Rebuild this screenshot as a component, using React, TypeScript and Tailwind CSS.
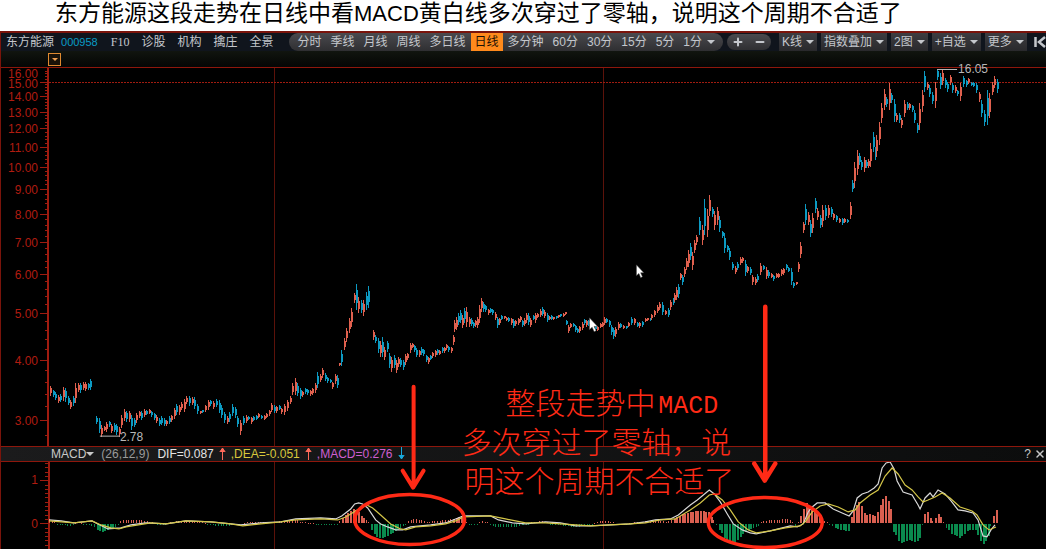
import { Minus, Plus, X } from "lucide-react";

const UI_FONT = "font-['Liberation_Sans','Noto_Sans_CJK_SC',sans-serif]";

/* Candles: each run spreads its "high-low" bars evenly between two x positions. r = rising, d = falling. */
const runs: [number, number, string][] = [
  [49, 89, "386-396r 390-397d 392-400d 395-403r 394-402d 387-401r 388-402d 396-405d 400-409r 396-406d 383-403r 383-392r 383-393d 382-390r 382-391r 383-390d 379-390d"],
  [95, 185, "416-424d 418-433d 425-437r 426-431r 422-432r 421-427d 424-433r 423-432d 424-435d 427-437r 415-428r 409-421r 411-422d 411-422r 415-430d 418-427d 413-423r 411-418r 411-420d 409-417r 410-415d 409-414r 411-417d 413-420d 415-423r 418-426d 416-425d 418-426d 420-426r 416-424d 415-422r 408-419r 404-415d 405-415r 402-410r 399-412r 396-404r"],
  [188, 239, "396-406d 397-405r 397-409d 404-414d 411-414r 410-413d 405-412r 400-410r 400-406d 401-409r 399-407d 400-413d 405-418d 412-423d 416-424r 412-422d 404-416d 407-418d 416-427d 420-435r"],
  [242, 283, "416-425d 415-423r 416-420d 417-424r 416-421d 415-420d 413-418r 415-419d 415-420r 413-418r 410-416r 403-412r 405-413d 406-413r 405-410d 408-414r 404-415r"],
  [286, 336, "400-411r 396-404r 383-395r 378-395r 383-396d 388-399d 391-397r 388-394d 389-395d 390-396r 388-395r 383-393r 372-388d 374-382r 368-378r 373-381d 377-383d 379-383d 382-389r 374-384r 375-388d"],
  [338, 367, "363-366r 350-366d 338-350r 328-342r 318-333r 308-327r 293-303r 284-310d 297-313r 300-313d 300-316r 292-310d 286-308d"],
  [372, 452, "330-340r 335-343d 338-353d 341-357r 337-357d 347-360r 341-352d 353-368d 357-372r 355-368d 360-373r 357-367r 358-367d 360-370d 354-365r 353-360r 343-353r 343-348r 345-352d 348-357d 350-357r 347-355d 349-356d 355-362d 357-364r 355-360d 352-358r 350-357r 349-355d 350-355r 347-353d 347-353r 344-350r 346-352d 347-353r 335-345r"],
  [453, 480, "320-332r 317-330r 313-325d 310-323d 315-328r 308-323d 307-327r 317-327r 318-326d 322-328d 320-327r 317-328r 305-323r 298-312r"],
  [482, 565, "302-312d 305-312d 309-315r 308-313d 309-315d 312-320r 317-328d 318-325r 315-320d 316-319r 317-321r 317-322d 318-325r 319-328d 320-326r 318-325r 316-322r 320-327d 318-326r 313-323r 313-325d 318-327r 315-320d 313-323r 313-318r 309-317r 307-316d 310-318r 313-322d 316-320r 315-320d 317-320r 316-319d 315-318r 314-317d 313-317r 312-315r"],
  [566, 613, "320-325d 325-333r 323-328r 323-327d 325-332d 328-333d 326-333r 322-330r 319-325d 320-327r 320-326d 322-327d 323-327r 325-330d 326-331r 323-328r 322-327r 317-325r 318-323d 320-327d 325-335d 328-339d"],
  [615, 650, "327-337r 322-330r 323-328d 325-329r 326-329d 322-327r 317-325d 318-325r 322-327d 322-328r 321-327d 318-322r 318-321r 318-321d"],
  [651, 673, "314-320r 310-317r 305-313r 302-310r 302-315d 310-315r 308-317d 300-310r 298-305d"],
  [674, 696, "293-302r 287-300r 284-298d 273-280r 275-285d 267-277r 258-270r 250-267r 243-260d 252-270r 240-253r 235-245r"],
  [699, 729, "217-235d 225-245r 199-235d 209-237r 195-216r 207-217d 211-230r 207-225r 216-232d 231-238d 233-253d 245-252d 248-260d"],
  [732, 760, "262-270d 266-274r 262-270d 257-265r 257-263r 260-276d 266-273r 267-275d 275-285r 277-285r 274-282d 263-275r"],
  [763, 796, "265-270d 267-279r 270-278d 273-278r 275-281d 273-278r 273-278r 269-276r 268-275r 264-270d 267-272d 268-285d 282-288d 282-285r"],
  [798, 822, "262-272r 242-258r 222-233r 204-225d 212-225r 220-237d 213-233r 198-213d 208-220r 215-228d 205-227r"],
  [825, 850, "205-220d 205-218r 207-217d 213-220r 215-222d 218-223r 218-225d 218-223r 219-223d 202-219r"],
  [852, 875, "180-192d 162-188r 150-175r 153-165d 160-170d 157-172r 160-168d 159-168r 143-167r 132-152d 147-160d"],
  [876, 901, "135-157r 122-145r 103-123r 89-110r 97-107d 83-110r 93-103d 99-122d 113-122r 113-123d 118-128r"],
  [904, 929, "100-117r 102-110d 103-110r 105-112d 110-123d 123-133d 103-130r 90-112r 71-92d 82-90r 85-97d"],
  [932, 960, "92-104d 82-108r 69-80d 73-89d 69-85r 78-88d 82-92d 75-85r 83-93d 85-93r 90-96d 83-101r"],
  [963, 997, "76-87d 80-87d 78-84r 82-86d 82-87d 83-93d 92-102r 100-117d 110-126d 90-125d 93-118r 82-95r 76-88r 79-93d"],
];

const candles = runs.flatMap(([from, to, text]) => {
  const bars = text.split(" ");
  return bars.map((bar, i) => {
    const [high, low] = bar.slice(0, -1).split("-").map(Number);
    return { x: Math.round(from + ((to - from) * i) / (bars.length - 1)), high, low, up: bar.endsWith("r") };
  });
});

/* Histogram outline: x, height above the zero line. */
const outline: [number, number][] = [
  [48, 3], [52, 1], [58, -1], [70, -2], [75, 1], [92, -2], [97, -7], [100, -8], [105, -6], [115, -3], [118, 1], [122, 3], [140, 3],
  [150, 1], [160, -1], [175, 2], [190, 2], [200, 1], [215, -2], [225, -2], [250, 1], [270, 1], [285, 2], [295, 3], [300, 1],
  [325, -1], [335, -1], [339, 3], [345, 9], [351, 14], [356, 12], [362, 5], [366, 2], [368, -1], [371, -8], [376, -14], [382, -14],
  [388, -11], [394, -7], [402, -2], [406, 1], [412, 4], [420, 3], [425, 1], [445, 3], [455, 5], [460, 7], [464, 2], [468, -1],
  [475, -1], [480, 2], [487, 1], [493, -3], [515, -3], [522, -1], [540, 2], [555, -1], [575, -3], [585, -2], [600, 2], [607, 2],
  [620, -1], [635, 1], [650, 2], [658, 3], [665, 1], [672, 3], [680, 8], [690, 11], [700, 12], [708, 11], [713, 3], [716, -1],
  [720, -8], [726, -17], [735, -19], [742, -10], [750, -5], [758, -2], [762, 2], [775, 3], [788, 4], [792, 1], [795, -2], [798, 1],
  [802, 12], [806, 20], [812, 12], [818, 8], [824, 2], [830, -1], [838, -6], [849, -7], [851, 6], [854, 16], [859, 22], [865, 8],
  [870, 9], [875, 7], [880, 18], [884, 29], [888, 22], [891, 10], [893, -8], [900, -20], [908, -16], [916, -19], [921, -10], [923, 8],
  [928, 12], [931, 1], [934, 3], [937, 10], [941, 4], [944, -1], [950, -9], [959, -14], [968, -6], [975, -6], [982, -22],
  [988, -12], [991, 3], [996, 13],
];

function heightAt(x: number) {
  const i = outline.findIndex(([px]) => px >= x);
  if (i <= 0) return outline[0][1];
  const [x0, h0] = outline[i - 1];
  const [x1, h1] = outline[i];
  return h0 + ((h1 - h0) * (x - x0)) / (x1 - x0);
}
const histogram = Array.from({ length: 360 }, (_, i) => Math.round(48 + i * 2.64))
  .filter((x) => x <= 996)
  .map((x) => ({ x, h: heightAt(x) }));

const DIF =
  "48,520 60,521 73,523 91,521 97,524 107,529 120,528 130,525 145,523 165,524 185,521 210,522 230,524 240,525 260,523 280,522 295,519 320,518 335,519 341,516 350,509 354,504 358,503 362,504 367,508 371,514 375,520 380,524 387,527 395,530 402,530 410,527 430,525 445,523 455,519 463,516 490,516 498,520 512,523 525,524 545,522 560,523 575,526 590,526 610,525 630,524 645,522 655,520 670,519 678,515 690,505 697,500 703,495 709,490 714,494 720,502 727,514 733,524 742,530 750,533 756,534 770,531 790,526 797,527 803,524 808,512 812,507 817,503 825,503 833,509 842,513 849,516 853,511 857,498 862,494 868,492 874,488 878,484 882,468 886,463 890,462 894,469 897,481 903,492 912,495 918,505 920,509 925,498 930,493 933,497 938,490 945,494 951,501 958,510 965,511 973,513 978,520 983,536 987,537 991,530 995,525";
const DEA =
  "48,521 73,523 91,521 100,525 110,528 118,529 125,527 150,523 165,524 185,521 210,522 230,524 242,526 260,524 280,522 295,520 320,519 337,520 345,517 350,514 358,509 366,505 372,508 380,515 390,524 400,529 405,530 415,527 430,526 445,524 455,521 463,517 490,516 505,519 525,523 545,523 575,525 590,526 610,525 630,524 645,523 660,520 675,519 690,510 700,503 709,495 714,494 722,500 730,510 738,522 748,530 756,533 770,531 785,528 800,526 805,522 812,512 820,506 828,504 838,507 848,512 855,510 860,503 870,495 878,490 885,476 892,468 898,474 905,485 912,490 918,497 923,502 928,500 935,497 942,493 950,498 960,507 972,511 977,515 983,525 989,530 996,527";

const priceY = (p: number) => 420 - 210.3 * Math.log(p / 3);
const priceLabels = [16, 15, 14, 13, 12, 11, 10, 9, 8, 7, 6, 5, 4, 3];
const minorPrices = Array.from({ length: 66 }, (_, i) => 2.8 + i * 0.2);

function Caret() {
  return (
    <svg viewBox="0 0 8 4" className="h-1 w-2 shrink-0 fill-current" aria-hidden="true">
      <path d="M0 0h8L4 4z" />
    </svg>
  );
}

function Trend({ down = false }: { down?: boolean }) {
  return (
    <svg viewBox="0 0 7 13" className={`h-[13px] w-[7px] shrink-0 ${down ? "rotate-180 text-[#18a8dc]" : "text-[#ff6a5a]"}`} aria-hidden="true">
      <path d="M3.5 1v12M0.8 5 3.5 1l2.7 4" fill="currentColor" stroke="currentColor" />
    </svg>
  );
}

const links = ["诊股", "机构", "擒庄", "全景"];
const periods = ["分时", "季线", "月线", "周线", "多日线", "日线", "多分钟", "60分", "30分", "15分", "5分", "1分"];
const menus = ["K线", "指数叠加", "2图", "+自选", "更多"];

function Toolbar() {
  return (
    <nav className="flex h-[18px] items-center overflow-hidden whitespace-nowrap bg-[#10151d] pl-[5px] text-[12px] leading-[18px] text-[#c4c7cc]">
      <span>东方能源</span>
      <span className="ml-[7px] text-[11px] text-[#0a9cc6]">000958</span>
      <div className="ml-[13px] flex gap-3">
        <a href="#f10" className="font-['Liberation_Serif',serif]">F10</a>
        {links.map((l) => (
          <a key={l} href={`#${l}`}>{l}</a>
        ))}
      </div>
      <div className="ml-4 flex shrink-0 items-center gap-px rounded-full bg-linear-to-b from-[#4a4a4e] to-[#2f2f32] pl-1 pr-2">
        {periods.map((p) => (
          <button
            key={p}
            type="button"
            aria-pressed={p === "日线"}
            className="px-1 aria-pressed:bg-[#ff8a1c] aria-pressed:text-[#1c1206]"
          >
            {p}
          </button>
        ))}
        <Caret />
      </div>
      <div className="ml-1 flex h-4 shrink-0 items-center gap-[10px] rounded-full bg-linear-to-b from-[#4a4a4e] to-[#2f2f32] px-[5px]">
        <button type="button" aria-label="放大"><Plus size={12} strokeWidth={4} /></button>
        <button type="button" aria-label="缩小"><Minus size={12} strokeWidth={4} /></button>
      </div>
      <div className="ml-2 flex shrink-0 gap-1">
        {menus.map((m) => (
          <button key={m} type="button" className="flex items-center gap-1 bg-linear-to-b from-[#3d3d41] to-[#29292c] px-[3px]">
            {m}
            <Caret />
          </button>
        ))}
      </div>
      <button type="button" aria-label="收起" className="ml-auto shrink-0">
        <svg viewBox="0 0 12 12" className="size-3" fill="none" stroke="currentColor" strokeWidth="2.500">
          <path d="M1.500 1v10M11 1 5 6l6 5" />
        </svg>
      </button>
    </nav>
  );
}

function PriceChart() {
  return (
    <svg viewBox="0 67 1046 379" className="block w-full overflow-visible" role="img" aria-label="东方能源 日线">
      <g stroke="#6d120a" shapeRendering="crispEdges">
        <path d="M0 67.5h1046" stroke="#8e170c" />
        <path d="M273.5 68v378M603.5 68v378" stroke="#5c120a" />
        <path d="M48 82.5h998" stroke="#a01c10" strokeDasharray="2 1" />
        <path d="M47.5 68v378" stroke="#a01c10" strokeWidth="2" />
        {priceLabels.slice(1).map((p) => (
          <path key={p} d={`M39 ${Math.round(priceY(p)) + 0.5}h8`} stroke="#a01c10" />
        ))}
        {minorPrices.map((p) => (
          <path key={p} d={`M44 ${Math.round(priceY(p)) + 0.5}h3`} stroke="#a01c10" />
        ))}
      </g>
      <g fill="#b01c10" fontSize="12" textAnchor="end">
        {priceLabels.map((p) => (
          <text key={p} x="37" y={p === 16 ? 78 : p === 15 ? 88 : Math.round(priceY(p)) + 5}>
            {p.toFixed(2)}
          </text>
        ))}
      </g>
      <g shapeRendering="crispEdges">
        {candles.map((c, i) => (
          <g key={i} fill={c.up ? "#e0604e" : "#0c9ac2"}>
            <rect x={c.x} y={c.high} width="1" height={c.low - c.high} />
            <rect x={c.x} y={c.high + Math.floor((c.low - c.high) / 4)} width="2" height={Math.ceil((c.low - c.high) / 2)} />
          </g>
        ))}
      </g>
      <path d="M99 436.5h20M937 69.5h20" stroke="#b8b8b8" />
      <g fill="#b8b8b8" fontSize="12">
        <text x="119" y="441">2.78</text>
        <text x="958" y="73">16.05</text>
      </g>
    </svg>
  );
}

function MacdHeader() {
  return (
    <div className="flex h-4 items-center overflow-hidden whitespace-nowrap border-y border-[#8e170c] bg-linear-to-r from-[#1b1b1c] to-[#0c0d0d] pl-[50px] text-[12px] leading-[14px] text-[#c8c8c8]">
      <button type="button" className="flex items-center">
        MACD
        <Caret />
      </button>
      <span className="ml-[7px] text-[#9a9a9a]">(26,12,9)</span>
      <span className="ml-2 mr-[5px] text-[#e4e4e4]">DIF=0.087</span>
      <Trend />
      <span className="ml-[5px] mr-[5px] text-[#d9c93c]">,DEA=-0.051</span>
      <Trend />
      <span className="ml-[5px] mr-[5px] text-[#cf5fd0]">,MACD=0.276</span>
      <Trend down />
      <button type="button" aria-label="帮助" className="ml-auto">?</button>
      <button type="button" aria-label="关闭" className="ml-[3px] shrink-0"><X size={12} strokeWidth={3} /></button>
    </div>
  );
}

function MacdChart() {
  return (
    <svg viewBox="0 462 1046 87" className="block w-full" role="img" aria-label="MACD">
      <g stroke="#a01c10" shapeRendering="crispEdges">
        <path d="M273.5 462v87M603.5 462v87" stroke="#5c120a" />
        <path d="M47.5 462v87" strokeWidth="2" />
        <path d="M39 480.5h8M39 523.5h8" />
        {Array.from({ length: 20 }, (_, i) => (
          <path key={i} d={`M44 ${Math.round(463 + i * 4.3) + 0.5}h3`} />
        ))}
      </g>
      <g fill="#b01c10" fontSize="12" textAnchor="end">
        <text x="37" y="484">1</text>
        <text x="37" y="528">0</text>
      </g>
      <g shapeRendering="crispEdges">
        {histogram.map(({ x, h }) => (
          <rect
            key={x}
            x={x}
            y={h > 0 ? 523 - Math.round(h) : 524}
            width={Math.abs(h) > 4 ? 2 : 1}
            height={Math.max(1, Math.abs(Math.round(h)))}
            fill={h > 0 ? "#d95f50" : "#0a8a4e"}
          />
        ))}
      </g>
      <polyline points={DIF} fill="none" stroke="#d8d8d8" strokeWidth="1.2" />
      <polyline points={DEA} fill="none" stroke="#d4c648" strokeWidth="1.2" />
    </svg>
  );
}

function Annotations() {
  return (
    <svg viewBox="0 67 1046 482" className="pointer-events-none absolute inset-0 size-full">
      <g fill="none" stroke="#ff2a16" strokeWidth="4" strokeLinecap="round" strokeLinejoin="round">
        <path d="M413 387v100M402 471l10.500 17L423 471" />
        <path d="M765 307v172M754 464l10.500 17L775 464" strokeWidth="4.500" />
        <ellipse cx="409" cy="520" rx="55" ry="25" strokeWidth="3.500" />
        <ellipse cx="765" cy="523" rx="57" ry="25" strokeWidth="3.500" />
      </g>
      <g fill="#ff2a16" fontSize="30" fontWeight="300" className="font-['Noto_Sans_CJK_SC',sans-serif]">
        <text x="505" y="414">整段走势中</text>
        <text x="658" y="413" fontSize="25" className="font-['Liberation_Mono',monospace]">MACD</text>
        <text x="461" y="453">多次穿过了零轴，说</text>
        <text x="464" y="492">明这个周期不合适了</text>
      </g>
      <g fill="#fff" stroke="#333" strokeWidth="0.5">
        <path d="M589 318v12l2.700-2.500 2 4.500 2-1-2-4.300h3.500z" />
        <path d="M636 265v11l2.500-2.300 1.800 4.200 1.800-.9-1.800-4h3.200z" />
      </g>
    </svg>
  );
}

export default function App() {
  return (
    <div className={`min-h-screen bg-white ${UI_FONT}`}>
      <h1 className="h-[31px] overflow-hidden whitespace-nowrap pl-[55px] text-[23px] leading-[27px] text-black">
        东方能源这段走势在日线中看<span className="text-[22px]">MACD</span>黄白线多次穿过了零轴，说明这个周期不合适了
      </h1>
      <main className="border-l border-t-2 border-[#7a140b] bg-black">
        <Toolbar />
        <div className="flex h-4 items-center bg-linear-to-b from-[#11150f] to-[#050605] pl-[47px]">
          <button type="button" aria-label="展开" className="flex size-[13px] items-center justify-center border border-[#e08a30] bg-[#1a1208] text-[#f0a050]">
            <svg viewBox="0 0 6 3" className="h-[3px] w-[6px] fill-current"><path d="M0 0h6L3 3z" /></svg>
          </button>
        </div>
        <div className="relative">
          <PriceChart />
          <MacdHeader />
          <MacdChart />
          <Annotations />
        </div>
      </main>
    </div>
  );
}
